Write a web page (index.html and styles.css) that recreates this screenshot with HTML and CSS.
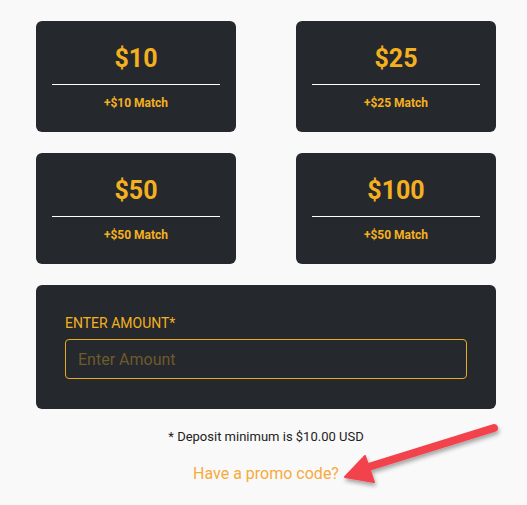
FILE: index.html
```html
<!DOCTYPE html>
<html>
<head>
<meta charset="utf-8">
<link rel="stylesheet" href="styles.css">
</head>
<body>
<div class="wrap">
  <div class="grid">
    <div class="card"><div class="amt">$10</div><div class="rule"></div><div class="match">+$10 Match</div></div>
    <div class="card"><div class="amt">$25</div><div class="rule"></div><div class="match">+$25 Match</div></div>
    <div class="card"><div class="amt">$50</div><div class="rule"></div><div class="match">+$50 Match</div></div>
    <div class="card"><div class="amt">$100</div><div class="rule"></div><div class="match">+$50 Match</div></div>
  </div>
  <div class="panel">
    <label class="label">ENTER AMOUNT*</label>
    <input class="input" type="text" placeholder="Enter Amount">
  </div>
  <p class="note">* Deposit minimum is $10.00 USD</p>
  <p class="promo"><a class="promo-link">Have a promo code?</a></p>
</div>
<svg class="arrow" width="527" height="505" viewBox="0 0 527 505">
  <defs>
    <filter id="sh" x="-20%" y="-50%" width="140%" height="200%">
      <feDropShadow dx="1" dy="3" stdDeviation="2" flood-color="#000" flood-opacity="0.35"/>
    </filter>
  </defs>
  <g filter="url(#sh)" fill="#f2434b" stroke="#f2434b">
    <line x1="494" y1="428" x2="362" y2="469" stroke-width="8" stroke-linecap="round"/>
    <polygon points="345,477 365,456 374,482" stroke-width="2" stroke-linejoin="round"/>
  </g>
</svg>
</body>
</html>
```
FILE: styles.css
```css
html, body {
  margin: 0;
  padding: 0;
  background: #f9f9f9;
  font-family: Roboto, "Liberation Sans", sans-serif;
}
.wrap {
  width: 460px;
  margin-left: 36px;
  padding-top: 21px;
}
.grid {
  display: grid;
  grid-template-columns: 200px 200px;
  column-gap: 60px;
  row-gap: 21px;
}
.card {
  height: 111px;
  background: #25282d;
  border-radius: 6px;
  box-sizing: border-box;
  padding: 23px 16px 0;
  text-align: center;
}
.amt {
  color: #f4b01f;
  font-size: 25px;
  font-weight: 700;
  line-height: 30px;
}
.rule {
  height: 1px;
  background: #ffffff;
  margin-top: 10px;
}
.match {
  color: #f4b01f;
  font-size: 12px;
  font-weight: 700;
  line-height: 16px;
  margin-top: 10px;
}
.panel {
  margin-top: 21px;
  background: #25282d;
  border-radius: 6px;
  padding: 30px 29px 30px;
  display: flex;
  flex-direction: column;
  gap: 8px;
}
.label {
  color: #f4b01f;
  font-size: 14px;
  line-height: 16px;
}
.input {
  height: 40px;
  box-sizing: border-box;
  background: transparent;
  border: 1px solid #e9ab22;
  border-radius: 4px;
  padding: 0 12px;
  font-family: Roboto, "Liberation Sans", sans-serif;
  font-size: 16px;
  color: #f4b01f;
  outline: none;
}
.input::placeholder {
  color: #6e5a2b;
}
.note {
  margin: 20px 0 0;
  text-align: center;
  font-size: 13px;
  line-height: 16px;
  color: #222222;
}
.promo {
  margin: 19px 0 0;
  text-align: center;
  font-size: 16px;
  line-height: 20px;
}
.promo-link {
  color: #f7aa3c;
}
.arrow {
  position: absolute;
  left: 0;
  top: 0;
  pointer-events: none;
}
```
